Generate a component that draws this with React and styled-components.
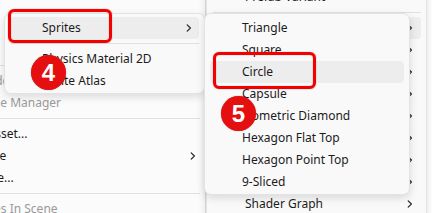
import React from "react";
import styled, { createGlobalStyle } from "styled-components";

const Global = createGlobalStyle`
  html, body { margin: 0; padding: 0; background: #ffffff; overflow: hidden; }
  #root { width: 432px; height: 213px; }
`;

const Stage = styled.div`
  position: relative;
  width: 432px;
  height: 213px;
  overflow: hidden;
  background: #ffffff;
  font-family: "Noto Sans", "Open Sans", sans-serif;
`;

const Menu = styled.div`
  position: absolute;
  left: ${(p) => p.$left}px;
  top: ${(p) => p.$top}px;
  width: ${(p) => p.$width}px;
  box-sizing: border-box;
  display: flex;
  flex-direction: column;
  padding: 3px 0 ${(p) => p.$padBottom ?? 3}px;
  background: ${(p) => p.$bg || "#f9f9f9"};
  border: 1px solid #e3e3e3;
  border-radius: 7px;
  box-shadow: 0 3px 9px rgba(0, 0, 0, 0.13);
`;

const Item = styled.div`
  display: flex;
  align-items: center;
  height: 22px;
  margin: 0 5px;
  padding: 0 ${(p) => p.$padRight ?? 7}px 0 ${(p) => p.$padLeft ?? 32}px;
  border-radius: 4px;
  background: ${(p) => (p.$hover ? "#ededed" : "transparent")};
  color: ${(p) => (p.$disabled ? "#9a9a9a" : "#1b1b1b")};
  font-size: 12px;
  line-height: 22px;
  white-space: nowrap;
`;

const Label = styled.span`
  flex: 1;
`;

const Separator = styled.div`
  height: 1px;
  margin: 4px 5px 4px 6px;
  background: #e0e0e0;
`;

const ChevronSvg = styled.svg`
  width: 6px;
  height: 8px;
  flex: none;
`;

const Chevron = () => (
  <ChevronSvg viewBox="0 0 6 8">
    <path d="M1.2 0.9 L4.4 4 L1.2 7.1" fill="none" stroke="#222222" strokeWidth="1.2" strokeLinecap="round" strokeLinejoin="round" />
  </ChevronSvg>
);

const Highlight = styled.div`
  position: absolute;
  left: ${(p) => p.$left}px;
  top: ${(p) => p.$top}px;
  width: ${(p) => p.$width}px;
  height: ${(p) => p.$height}px;
  box-sizing: border-box;
  border: 3.5px solid #f50000;
  border-radius: 6px;
  box-shadow: 0 0 1px rgba(90, 0, 0, 0.6), inset 0 0 1px rgba(90, 0, 0, 0.5);
`;

const Badge = styled.div`
  position: absolute;
  left: ${(p) => p.$left}px;
  top: ${(p) => p.$top}px;
  width: 35px;
  height: 35px;
  border-radius: 50%;
  background: #e60f0f;
  box-shadow: 0 0 1px rgba(80, 0, 0, 0.6);
  display: flex;
  align-items: center;
  justify-content: center;
  color: #ffffff;
  font-family: "Liberation Sans", Arial, sans-serif;
  font-weight: 700;
  font-size: 24px;
  line-height: 1;
`;

const MenuRow = ({ label, sub, hover, disabled, padRight, padLeft }) => (
  <Item $hover={hover} $disabled={disabled} $padRight={padRight} $padLeft={padLeft}>
    <Label>{label}</Label>
    {sub && <Chevron />}
  </Item>
);

const assetsMenu = [
  { label: "Open" },
  { label: "Delete" },
  { label: "Rename" },
  { label: "Copy Path" },
  { sep: true },
  { label: "Open Scene Additive", disabled: true },
  { label: "View in Package Manager", disabled: true },
  { sep: true },
  { label: "Import New Asset..." },
  { label: "Import Package", sub: true },
  { label: "Export Package..." },
  { sep: true },
  { label: "Find References In Scene", disabled: true },
  { label: "Select Dependencies" },
];

const createMenu = [
  { label: "Prefab Variant" },
  { sep: true },
  { label: "2D", sub: true, hover: true },
  { label: "Animation", sub: true },
  { label: "Audio", sub: true },
  { label: "Physics", sub: true },
  { label: "Rendering", sub: true },
  { label: "Scene", sub: true },
  { label: "Scripting", sub: true },
  { label: "Shader", sub: true },
  { label: "Shader Graph", sub: true },
];

const twoDMenu = [
  { label: "Sprites", sub: true, hover: true },
  { sep: true },
  { label: "Physics Material 2D" },
  { label: "Sprite Atlas" },
];

const spritesMenu = [
  { label: "Triangle" },
  { label: "Square" },
  { label: "Circle", hover: true },
  { label: "Capsule" },
  { label: "Isometric Diamond" },
  { label: "Hexagon Flat Top" },
  { label: "Hexagon Point Top" },
  { label: "9-Sliced" },
];

const renderRows = (rows, opts = {}) =>
  rows.map((r, i) =>
    r.sep ? (
      <Separator key={i} />
    ) : (
      <MenuRow key={i} {...r} padRight={opts.padRight} padLeft={opts.padLeft} />
    )
  );

export default function App() {
  return (
    <Stage>
      <Global />
      <Menu $left={-121} $top={-31} $width={327} $bg="#fbfbfb">
        {renderRows(assetsMenu, { padRight: 4 })}
      </Menu>
      <Menu $left={206} $top={-18} $width={221}>
        {renderRows(createMenu, { padRight: 8, padLeft: 33 })}
      </Menu>
      <Menu $left={4} $top={13} $width={201} $padBottom={1}>
        {renderRows(twoDMenu, { padRight: 7 })}
      </Menu>
      <Menu $left={204} $top={13} $width={206} $padBottom={1}>
        {renderRows(spritesMenu)}
      </Menu>
      <Highlight $left={8} $top={9} $width={104} $height={34} />
      <Highlight $left={213} $top={52} $width={103} $height={37} />
      <Badge $left={31} $top={55}>4</Badge>
      <Badge $left={221} $top={96}>5</Badge>
    </Stage>
  );
}
